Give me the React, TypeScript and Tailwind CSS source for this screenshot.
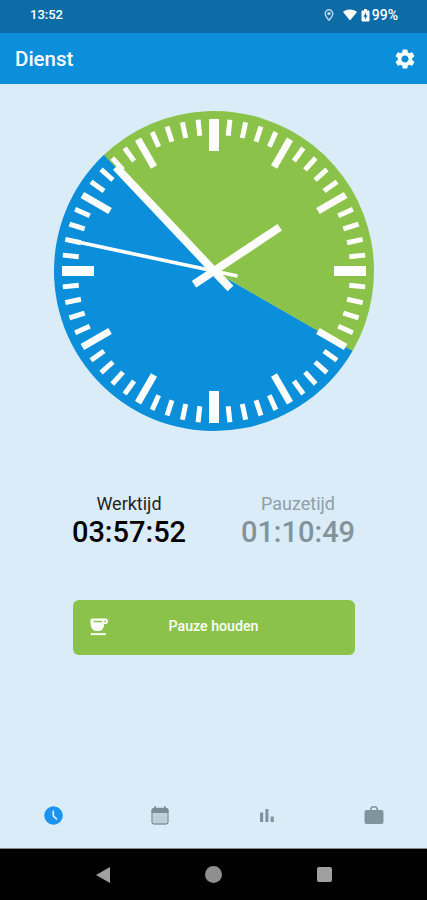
import { MdSettings } from "react-icons/md";

const CENTER = 160;

const HANDS = [
  { name: "hour", angle: 56.4, tip: 79, tail: 24, width: 8 },
  { name: "minute", angle: -43.3, tip: 143, tail: 24, width: 8 },
  { name: "second", angle: 282, tip: 151, tail: 24, width: 3.6 },
];

function pointAt(angle: number, radius: number) {
  const rad = (angle * Math.PI) / 180;
  return `${CENTER + radius * Math.sin(rad)} ${CENTER - radius * Math.cos(rad)}`;
}

function tickSize(minute: number) {
  if (minute % 15 === 0) return { width: 10, length: 32 };
  if (minute % 5 === 0) return { width: 7, length: 32 };
  return { width: 5, length: 16 };
}

function StatusBar() {
  return (
    <div className="flex h-[33px] items-center justify-between bg-[#0d6ca6] pr-[29px] pb-[3px] pl-[30px] text-[13px] font-medium text-white">
      <span>13:52</span>
      <div className="flex items-center">
        <svg viewBox="0 0 10 12" className="mr-[9px] h-3 w-[10px]">
          <path d="M5 .8a3.800 3.800 0 0 0-3.800 3.800C1.200 7.300 5 11.200 5 11.200s3.800-3.900 3.800-6.600A3.800 3.800 0 0 0 5 .8Z" fill="none" stroke="#b4d2e6" strokeWidth="1.500" />
          <circle cx="5" cy="4.600" r="1.700" fill="#c5deee" />
        </svg>
        <svg viewBox="0 0 14 12" className="mr-[4px] h-3 w-[14px]">
          <path d="M7 11.600 0 3C3.700-.3 10.300-.3 14 3Z" fill="white" />
        </svg>
        <svg viewBox="0 0 9 13" className="mr-[2px] h-[13px] w-[9px]">
          <path d="M3 0h3v1.500h1.500Q8.500 1.500 8.500 2.500v9Q8.500 12.500 7.500 12.500h-6Q.5 12.500.5 11.500v-9Q.5 1.500 1.500 1.500H3Z" fill="white" />
          <path d="M5 3.500 2.400 7.700h1.700v3l2.500-4.200H5Z" fill="#0d6ca6" />
        </svg>
        <span className="text-[14px]">99%</span>
      </div>
    </div>
  );
}

function Clock() {
  return (
    <svg viewBox="0 0 320 320" className="h-[320px] w-[320px] shrink-0">
      <path
        d={`M160 160 L${pointAt(119.8, 160)} A160 160 0 1 1 ${pointAt(-43.3, 160)} Z`}
        fill="#0c8fdb"
      />
      <path
        d={`M160 160 L${pointAt(-43.5, 160)} A160 160 0 0 1 ${pointAt(120, 160)} Z`}
        fill="#8bc34a"
      />
      {Array.from({ length: 60 }, (_, minute) => {
        const { width, length } = tickSize(minute);
        return (
          <rect
            key={minute}
            x={CENTER - width / 2}
            y={8}
            width={width}
            height={length}
            fill="white"
            transform={`rotate(${minute * 6} 160 160)`}
          />
        );
      })}
      {HANDS.map((hand) => (
        <rect
          key={hand.name}
          x={CENTER - hand.width / 2}
          y={CENTER - hand.tip}
          width={hand.width}
          height={hand.tip + hand.tail}
          fill="white"
          transform={`rotate(${hand.angle} 160 160)`}
        />
      ))}
    </svg>
  );
}

function Timer({ label, value, color }: { label: string; value: string; color: string }) {
  return (
    <div className={`flex w-[114px] flex-col items-center ${color}`}>
      <span className="text-[18px] leading-[24px] opacity-85">{label}</span>
      <span className="text-[29px] leading-[32px] font-medium">{value}</span>
    </div>
  );
}

function CupIcon() {
  return (
    <svg viewBox="0 0 18 18" className="h-[18px] w-[18px]">
      <path
        d="M2.500.5h12.700a2.800 2.800 0 0 1 0 5.600h-.9C14 9.800 12.200 13 9.500 13H5.800C2.800 13 .5 9 .5 4.500v-2a2 2 0 0 1 2-2ZM3.500 2.700v1.500h8.700V2.700Zm11-.2v1.900h.6a.95.95 0 0 0 0-1.900Z"
        fill="white"
        fillRule="evenodd"
      />
      <path d="M.8 15.200h15v1.900H.8Z" fill="white" />
    </svg>
  );
}

function ClockIcon() {
  return (
    <svg viewBox="0 0 19 19" className="size-[19px]">
      <circle cx="9.500" cy="9.500" r="9.300" fill="#1c93f0" />
      <path d="M9.300 4.500v5.300l3.700 3.700" fill="none" stroke="#daecf8" strokeWidth="1.700" />
    </svg>
  );
}

function CalendarIcon() {
  return (
    <svg viewBox="0 0 18 19" className="h-[19px] w-[18px]">
      <rect x="1" y="2.500" width="16" height="15.500" rx="2.500" fill="#c3d2da" stroke="#82959f" strokeWidth="1.300" />
      <path d="M.5 7V4.500A2.500 2.500 0 0 1 3 2h.4V.3h1.700V2h7.800V.3h1.700V2h.4a2.500 2.500 0 0 1 2.500 2.500V7Z" fill="#7a8d97" />
      <path d="M6 8v9M9 8v9M12 8v9M2 11h14M2 14h14" stroke="#b7c8d1" strokeWidth=".8" />
    </svg>
  );
}

function ChartIcon() {
  return (
    <svg viewBox="0 0 14 13" className="h-[13px] w-[14px]">
      <path d="M0 3.500h3.200V13H0ZM5.400 0h3v13h-3ZM10.600 7.500h3.200V13h-3.200Z" fill="#80949e" />
    </svg>
  );
}

function BriefcaseIcon() {
  return (
    <svg viewBox="0 0 20 19" className="h-[19px] w-5">
      <rect x=".5" y="4" width="19" height="14" rx="2" fill="#80949e" />
      <path d="M6.700 5V3.900a3.300 3.100 0 0 1 6.600 0V5" fill="none" stroke="#80949e" strokeWidth="1.500" />
    </svg>
  );
}

function TabBar() {
  return (
    <nav className="grid h-[66px] grid-cols-4 place-items-center">
      <ClockIcon />
      <CalendarIcon />
      <ChartIcon />
      <BriefcaseIcon />
    </nav>
  );
}

function SystemBar() {
  return (
    <div className="flex h-[52px] items-center justify-center gap-[95px] border-t border-[#7c868c] bg-black">
      <svg viewBox="0 0 14 16" className="h-4 w-[14px]">
        <path d="M0 8 14 0v16Z" fill="#a0a0a0" />
      </svg>
      <div className="size-[17px] rounded-full bg-[#8f8f8f]" />
      <div className="size-[15px] rounded-[2px] bg-[#a0a0a0]" />
    </div>
  );
}

export default function App() {
  return (
    <div className="flex h-[900px] w-[427px] flex-col bg-[#daecf8] font-[Roboto,sans-serif]">
      <StatusBar />
      <header className="flex h-[51px] items-center justify-between bg-[#0c8fdb] pr-[10px] pl-[15px] text-white">
        <h1 className="pt-[2px] text-[20.5px] font-medium">Dienst</h1>
        <MdSettings className="size-6" />
      </header>
      <main className="flex flex-1 flex-col items-center pt-[26.5px]">
        <Clock />
        <div className="mt-[61.5px] flex gap-[55px]">
          <Timer label="Werktijd" value="03:57:52" color="text-black" />
          <Timer label="Pauzetijd" value="01:10:49" color="text-[#84939b]" />
        </div>
        <button className="mt-[51.5px] grid h-[55px] w-[282px] grid-cols-[52px_1fr_52px] items-center rounded-md bg-[#8bc34a] text-[14.2px] font-medium text-white">
          <span className="flex justify-center">
            <CupIcon />
          </span>
          <span>Pauze houden</span>
        </button>
      </main>
      <TabBar />
      <SystemBar />
    </div>
  );
}
